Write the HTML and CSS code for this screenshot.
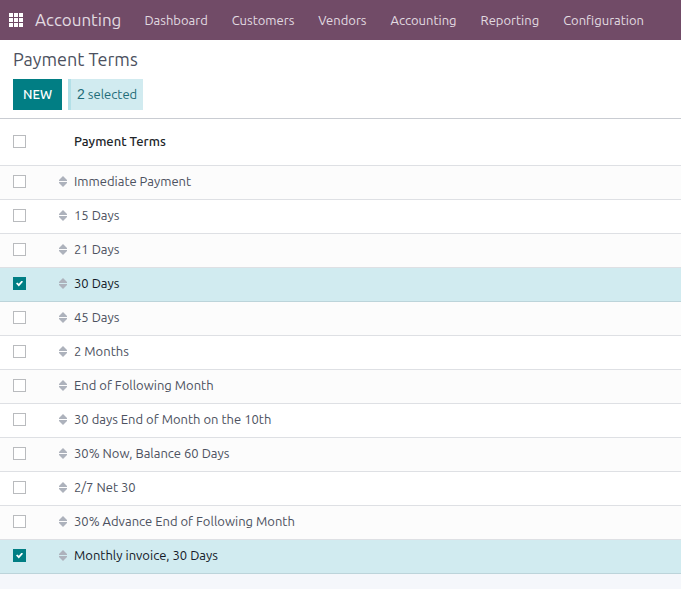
FILE: index.html
```html
<!DOCTYPE html>
<html lang="en">
<head>
    <meta charset="UTF-8">
    <meta name="viewport" content="width=device-width, initial-scale=1.0">
    <title>Payment Terms</title>
    <link rel="stylesheet" href="styles.css">
</head>
<body>
    <svg width="0" height="0" class="defs" aria-hidden="true">
        <symbol id="handle" viewBox="0 0 8 11">
            <path d="M4 0 L8 4 V5 H0 V4 Z M0 6 H8 V7 L4 11 L0 7 Z"/>
        </symbol>
    </svg>
    <header class="navbar">
        <button class="apps" aria-label="Apps">
            <svg width="14" height="14" viewBox="0 0 14 14" fill="#fff" shape-rendering="crispEdges">
                <path d="M0 0h4v4H0z M5 0h4v4H5z M10 0h4v4h-4z M0 5h4v4H0z M5 5h4v4H5z M10 5h4v4h-4z M0 10h4v4H0z M5 10h4v4H5z M10 10h4v4h-4z"/>
            </svg>
        </button>
        <a class="brand" href="#">Accounting</a>
        <nav class="menu">
            <a href="#">Dashboard</a>
            <a href="#">Customers</a>
            <a href="#">Vendors</a>
            <a href="#">Accounting</a>
            <a href="#">Reporting</a>
            <a href="#">Configuration</a>
        </nav>
    </header>
    <section class="control-panel">
        <h1 class="title">Payment Terms</h1>
        <div class="actions">
            <button class="btn-new">NEW</button>
            <span class="selection"><span class="count">2</span> selected</span>
        </div>
    </section>
    <table class="list">
        <thead>
            <tr>
                <th class="check"><input type="checkbox" aria-label="Select all"></th>
                <th class="sort"></th>
                <th class="name">Payment Terms</th>
            </tr>
        </thead>
        <tbody>
            <tr>
                <td class="check"><input type="checkbox" id="t1"></td>
                <td class="sort"><svg class="handle"><use href="#handle"/></svg></td>
                <td class="name"><label for="t1">Immediate Payment</label></td>
            </tr>
            <tr>
                <td class="check"><input type="checkbox" id="t2"></td>
                <td class="sort"><svg class="handle"><use href="#handle"/></svg></td>
                <td class="name"><label for="t2">15 Days</label></td>
            </tr>
            <tr>
                <td class="check"><input type="checkbox" id="t3"></td>
                <td class="sort"><svg class="handle"><use href="#handle"/></svg></td>
                <td class="name"><label for="t3">21 Days</label></td>
            </tr>
            <tr class="selected">
                <td class="check"><input type="checkbox" id="t4" checked></td>
                <td class="sort"><svg class="handle"><use href="#handle"/></svg></td>
                <td class="name"><label for="t4">30 Days</label></td>
            </tr>
            <tr>
                <td class="check"><input type="checkbox" id="t5"></td>
                <td class="sort"><svg class="handle"><use href="#handle"/></svg></td>
                <td class="name"><label for="t5">45 Days</label></td>
            </tr>
            <tr>
                <td class="check"><input type="checkbox" id="t6"></td>
                <td class="sort"><svg class="handle"><use href="#handle"/></svg></td>
                <td class="name"><label for="t6">2 Months</label></td>
            </tr>
            <tr>
                <td class="check"><input type="checkbox" id="t7"></td>
                <td class="sort"><svg class="handle"><use href="#handle"/></svg></td>
                <td class="name"><label for="t7">End of Following Month</label></td>
            </tr>
            <tr>
                <td class="check"><input type="checkbox" id="t8"></td>
                <td class="sort"><svg class="handle"><use href="#handle"/></svg></td>
                <td class="name"><label for="t8">30 days End of Month on the 10th</label></td>
            </tr>
            <tr>
                <td class="check"><input type="checkbox" id="t9"></td>
                <td class="sort"><svg class="handle"><use href="#handle"/></svg></td>
                <td class="name"><label for="t9">30% Now, Balance 60 Days</label></td>
            </tr>
            <tr>
                <td class="check"><input type="checkbox" id="t10"></td>
                <td class="sort"><svg class="handle"><use href="#handle"/></svg></td>
                <td class="name"><label for="t10">2/7 Net 30</label></td>
            </tr>
            <tr>
                <td class="check"><input type="checkbox" id="t11"></td>
                <td class="sort"><svg class="handle"><use href="#handle"/></svg></td>
                <td class="name"><label for="t11">30% Advance End of Following Month</label></td>
            </tr>
            <tr class="selected">
                <td class="check"><input type="checkbox" id="t12" checked></td>
                <td class="sort"><svg class="handle"><use href="#handle"/></svg></td>
                <td class="name"><label for="t12">Monthly invoice, 30 Days</label></td>
            </tr>
        </tbody>
    </table>
</body>
</html>
```

FILE: styles.css
```css
:root {
    --navbar: #714b67;
    --primary: #017e84;
    --info-bg: #d1ebf0;
    --info-bar: #b3e0e8;
    --info-text: #1e6b78;
    --text: #4c5160;
    --line: #dee0e4;
}
* {
    box-sizing: border-box;
}
body {
    margin: 0;
    background: #f5f7fb;
    color: var(--text);
    font-family: "Ubuntu", "Noto Sans", sans-serif;
    font-size: 13px;
    line-height: 20px;
}
button {
    border: 0;
    font: inherit;
}
a {
    color: inherit;
    text-decoration: none;
}
.defs {
    display: block;
}

/* Navbar */
.navbar {
    display: flex;
    align-items: center;
    height: 40px;
    padding-left: 9px;
    background: var(--navbar);
    color: #e2dbe1;
    white-space: nowrap;
}
.apps {
    display: flex;
    padding: 0;
    background: none;
}
.brand {
    margin: 0 23px 0 12px;
    font-size: 17px;
}
.menu {
    display: flex;
    gap: 24px;
}

/* Control panel */
.control-panel {
    padding: 7px 13px 8px;
    border-bottom: 1px solid #c9ccd2;
    background: #fff;
}
.title {
    margin: 0 0 8px;
    font-size: 18px;
    font-weight: 400;
    line-height: 24px;
}
.actions {
    display: flex;
    gap: 6px;
}
.btn-new {
    height: 31px;
    padding: 0 10px 2px;
    background: var(--primary);
    color: #fff;
    font-weight: 500;
}
.selection {
    height: 31px;
    padding: 5px 6px;
    border-left: 3px solid var(--info-bar);
    background: var(--info-bg);
    color: var(--info-text);
}
.count {
    font-family: "Liberation Sans", Arial, sans-serif;
    font-size: 14px;
}

/* List */
.list {
    width: 100%;
    border-spacing: 0;
    table-layout: fixed;
    background: #fff;
}
.list th,
.list td {
    height: 34px;
    padding: 0 0 2px;
    border-bottom: 1px solid var(--line);
    text-align: left;
    vertical-align: middle;
}
.list th {
    height: 47px;
    color: #212529;
    font-weight: 500;
}
.list td.name {
    padding-bottom: 4px;
}
.list tbody tr:nth-child(odd) {
    background: #fcfcfc;
}
.list tbody tr.selected {
    background: var(--info-bg);
    color: #111827;
}
.list tr.selected td {
    border-bottom-color: #bcd4da;
}
.list .check {
    width: 59px;
    padding-left: 13px;
}
.list .sort {
    width: 15px;
}
.handle {
    display: block;
    width: 8px;
    height: 11px;
    fill: #adb2bc;
}
input[type="checkbox"] {
    display: block;
    width: 13px;
    height: 13px;
    margin: 0;
    border: 1px solid #b9bbbe;
    background: #fff;
    appearance: none;
}
input[type="checkbox"]:checked {
    display: grid;
    place-items: center;
    border-color: var(--primary);
    background: var(--primary);
}
input[type="checkbox"]:checked::before {
    content: "";
    width: 7px;
    height: 6px;
    background: #fff;
    clip-path: polygon(0 50%, 18% 32%, 40% 55%, 82% 0, 100% 20%, 40% 100%);
}
```
